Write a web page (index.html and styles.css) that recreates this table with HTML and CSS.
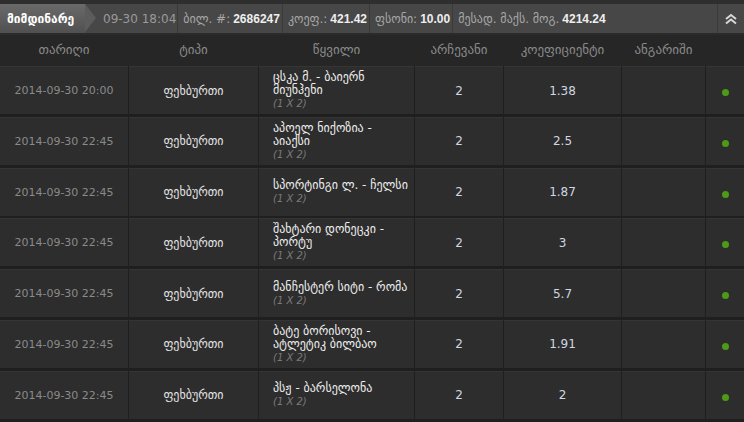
FILE: index.html
```html
<!DOCTYPE html>
<html lang="ka">
<head>
    <meta charset="UTF-8">
    <title>მიმდინარე</title>
    <link rel="stylesheet" href="styles.css">
</head>
<body>
    <div class="topbar">
        <div class="tab">მიმდინარე</div>
        <div class="seg seg-date">09-30 18:04</div>
        <div class="seg">ბილ. #: <b>2686247</b></div>
        <div class="seg">კოეფ.: <b>421.42</b></div>
        <div class="seg">ფსონი: <b>10.00</b></div>
        <div class="seg seg-last">მესად. მაქს. მოგ. <b>4214.24</b></div>
        <div class="toggle">
            <svg width="14" height="12" viewBox="0 0 14 12">
                <path d="M2 6 L7 2 L12 6 M2 10.5 L7 6.5 L12 10.5" fill="none" stroke="#d8d8d8" stroke-width="2"/>
            </svg>
        </div>
    </div>

    <div class="grid head">
        <div>თარიღი</div>
        <div>ტიპი</div>
        <div>წყვილი</div>
        <div>არჩევანი</div>
        <div>კოეფიციენტი</div>
        <div>ანგარიში</div>
        <div></div>
    </div>

    <div class="rows">
        <div class="grid row">
            <div class="date">2014-09-30 20:00</div>
            <div class="type">ფეხბურთი</div>
            <div class="pair"><span>ცსკა მ. - ბაიერნ მიუნჰენი</span><span class="pick">(1 X 2)</span></div>
            <div class="num">2</div>
            <div class="num">1.38</div>
            <div></div>
            <div class="status"><span class="dot"></span></div>
        </div>
        <div class="grid row">
            <div class="date">2014-09-30 22:45</div>
            <div class="type">ფეხბურთი</div>
            <div class="pair"><span>აპოელ ნიქოზია -<br>აიაქსი</span><span class="pick">(1 X 2)</span></div>
            <div class="num">2</div>
            <div class="num">2.5</div>
            <div></div>
            <div class="status"><span class="dot"></span></div>
        </div>
        <div class="grid row">
            <div class="date">2014-09-30 22:45</div>
            <div class="type">ფეხბურთი</div>
            <div class="pair"><span>სპორტინგი ლ. - ჩელსი</span><span class="pick">(1 X 2)</span></div>
            <div class="num">2</div>
            <div class="num">1.87</div>
            <div></div>
            <div class="status"><span class="dot"></span></div>
        </div>
        <div class="grid row">
            <div class="date">2014-09-30 22:45</div>
            <div class="type">ფეხბურთი</div>
            <div class="pair"><span>შახტარი დონეცკი - პორტუ</span><span class="pick">(1 X 2)</span></div>
            <div class="num">2</div>
            <div class="num">3</div>
            <div></div>
            <div class="status"><span class="dot"></span></div>
        </div>
        <div class="grid row">
            <div class="date">2014-09-30 22:45</div>
            <div class="type">ფეხბურთი</div>
            <div class="pair"><span>მანჩესტერ სიტი - რომა</span><span class="pick">(1 X 2)</span></div>
            <div class="num">2</div>
            <div class="num">5.7</div>
            <div></div>
            <div class="status"><span class="dot"></span></div>
        </div>
        <div class="grid row">
            <div class="date">2014-09-30 22:45</div>
            <div class="type">ფეხბურთი</div>
            <div class="pair"><span>ბატე ბორისოვი - ატლეტიკ ბილბაო</span><span class="pick">(1 X 2)</span></div>
            <div class="num">2</div>
            <div class="num">1.91</div>
            <div></div>
            <div class="status"><span class="dot"></span></div>
        </div>
        <div class="grid row">
            <div class="date">2014-09-30 22:45</div>
            <div class="type">ფეხბურთი</div>
            <div class="pair"><span>პსჟ - ბარსელონა</span><span class="pick">(1 X 2)</span></div>
            <div class="num">2</div>
            <div class="num">2</div>
            <div></div>
            <div class="status"><span class="dot"></span></div>
        </div>
    </div>
</body>
</html>
```

FILE: styles.css
```css
body {
    margin: 0;
    background-color: #262626;
    font-family: 'DejaVu Sans', 'Noto Sans', sans-serif;
    font-size: 11px;
    color: #ddd;
    overflow: hidden;
}

/* top bar */
.topbar {
    display: flex;
    align-items: stretch;
    height: 29px;
    margin-top: 4px;
    background-color: #474747;
    border-bottom: 2px solid #2b2b2b;
    box-shadow: 0 -4px 0 #2e2e2e;
    font-size: 12px;
    color: #a8a8a8;
}
.tab {
    position: relative;
    display: flex;
    align-items: center;
    width: 78px;
    padding-left: 7px;
    background: linear-gradient(#6a6a6a, #505050);
    color: #fff;
    font-weight: bold;
    font-size: 12px;
}
.tab::after {
    content: '';
    position: absolute;
    left: 85px;
    top: 0;
    border-top: 14.5px solid transparent;
    border-bottom: 14.5px solid transparent;
    border-left: 11px solid #5c5c5c;
}
.seg {
    display: flex;
    align-items: center;
    gap: 3px;
    padding: 0 2px 0 5px;
    border-right: 1px solid #3a3a3a;
    white-space: nowrap;
}
.seg b {
    font-family: 'Liberation Sans', Arial, sans-serif;
    font-size: 12px;
    color: #eee;
}
.seg-date {
    margin-left: 12px;
    padding: 0 1px 0 6px;
    color: #9a9a9a;
}
.seg-last {
    flex: 1;
    border-right: none;
}
.toggle {
    display: flex;
    align-items: center;
    justify-content: center;
    width: 26px;
    border-left: 1px solid #3a3a3a;
}

/* table */
.grid {
    display: grid;
    grid-template-columns: 128px 129px 155px 88px 117px 83px 38px;
    column-gap: 1px;
}
.head {
    height: 31px;
    padding-bottom: 2px;
    box-sizing: border-box;
    align-items: center;
    text-align: center;
    color: #8a8a8a;
    font-size: 13px;
}
.rows {
    display: flex;
    flex-direction: column;
    gap: 2.8px;
    background-color: #1f1f1f;
    padding: 0 0 3px;
}
.row {
    height: 48px;
    background-color: #1f1f1f;
}
.row > div {
    display: flex;
    align-items: center;
    justify-content: center;
    background-color: #2d2d2d;
    border-top: 1px solid #353535;
    box-sizing: border-box;
}
.row > .date {
    color: #8a8a8a;
}
.row > .type {
    font-size: 12px;
    color: #e4e4e4;
}
.row > .pair {
    flex-direction: column;
    align-items: stretch;
    padding-left: 14px;
    font-size: 12px;
    line-height: 13px;
    color: #eee;
}
.pick {
    font-style: italic;
    font-size: 10px;
    color: #7a7a7a;
}
.row > .num {
    font-size: 12px;
    color: #d0d6e2;
}
.dot {
    width: 7px;
    height: 7px;
    margin-top: 4px;
    border-radius: 50%;
    background-color: #4e9a14;
}
```
